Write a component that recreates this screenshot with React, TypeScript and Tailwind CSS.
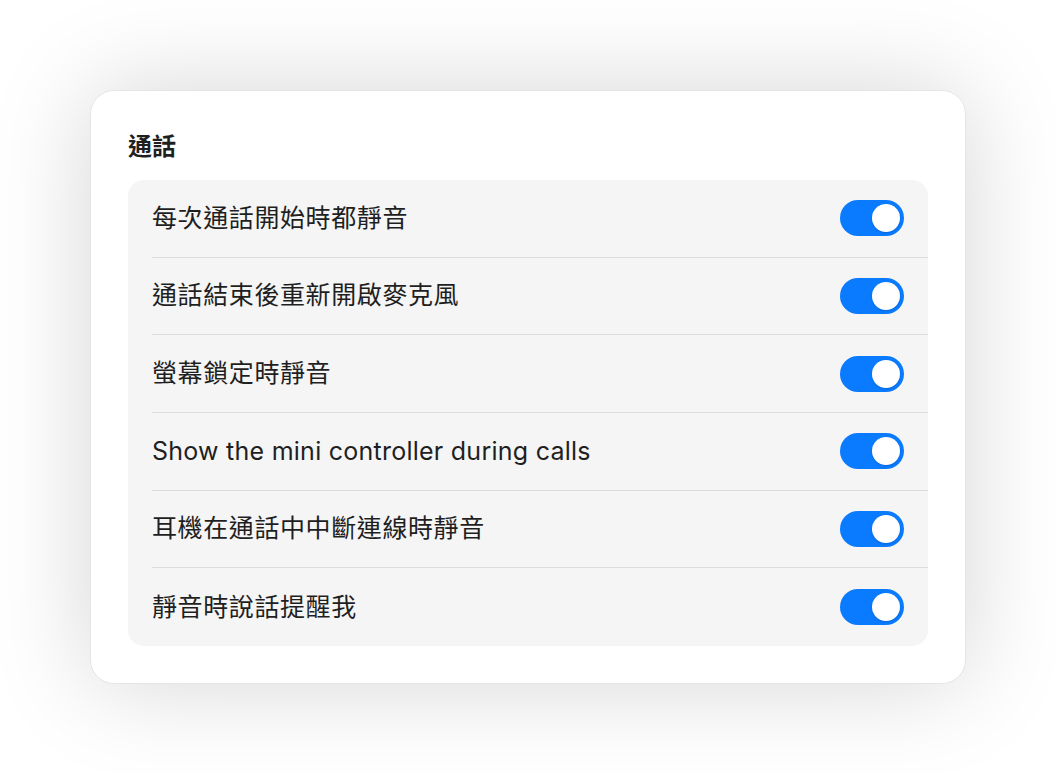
import React from 'react';

const rows = [
    { label: '每次通話開始時都靜音', cjk: true },
    { label: '通話結束後重新開啟麥克風', cjk: true },
    { label: '螢幕鎖定時靜音', cjk: true },
    { label: 'Show the mini controller during calls', cjk: false },
    { label: '耳機在通話中中斷連線時靜音', cjk: true },
    { label: '靜音時說話提醒我', cjk: true },
];

const Toggle = () => (
    <div className="w-[64px] h-[36px] rounded-full bg-[#0a7aff] flex items-center justify-end pr-[4px] shrink-0">
        <div className="w-[28px] h-[28px] rounded-full bg-white shadow-[0_1px_2px_rgba(0,0,0,0.15)]" />
    </div>
);

const App = () => {
    return (
        <div
            className="min-h-screen bg-white p-[90px] text-[#1f1f1f]"
            style={{ fontFamily: 'Inter, "Noto Sans CJK TC", sans-serif' }}
        >
            <div className="bg-white rounded-[24px] border border-[#e6e6e6] shadow-[0_0_100px_rgba(0,0,0,0.17)] px-[37px] pt-[37px] pb-[37px]">
                <h2 className="text-[24px] leading-[38px] font-bold mb-[14px]">通話</h2>
                <div className="bg-[#f5f5f5] rounded-[16px]">
                    {rows.map((row, i) => (
                        <div key={row.label} className="pl-[24px]">
                            <div
                                className={`flex items-center justify-between h-[77.7px] pr-[24px] ${
                                    i < rows.length - 1 ? 'border-b-[1.5px] border-[#dcdcdc]' : ''
                                }`}
                            >
                                <span className={row.cjk ? 'text-[25px] tracking-[0.6px]' : 'text-[25px] tracking-[0.25px]'}>
                                    {row.label}
                                </span>
                                <Toggle />
                            </div>
                        </div>
                    ))}
                </div>
            </div>
        </div>
    );
};

export default App;
